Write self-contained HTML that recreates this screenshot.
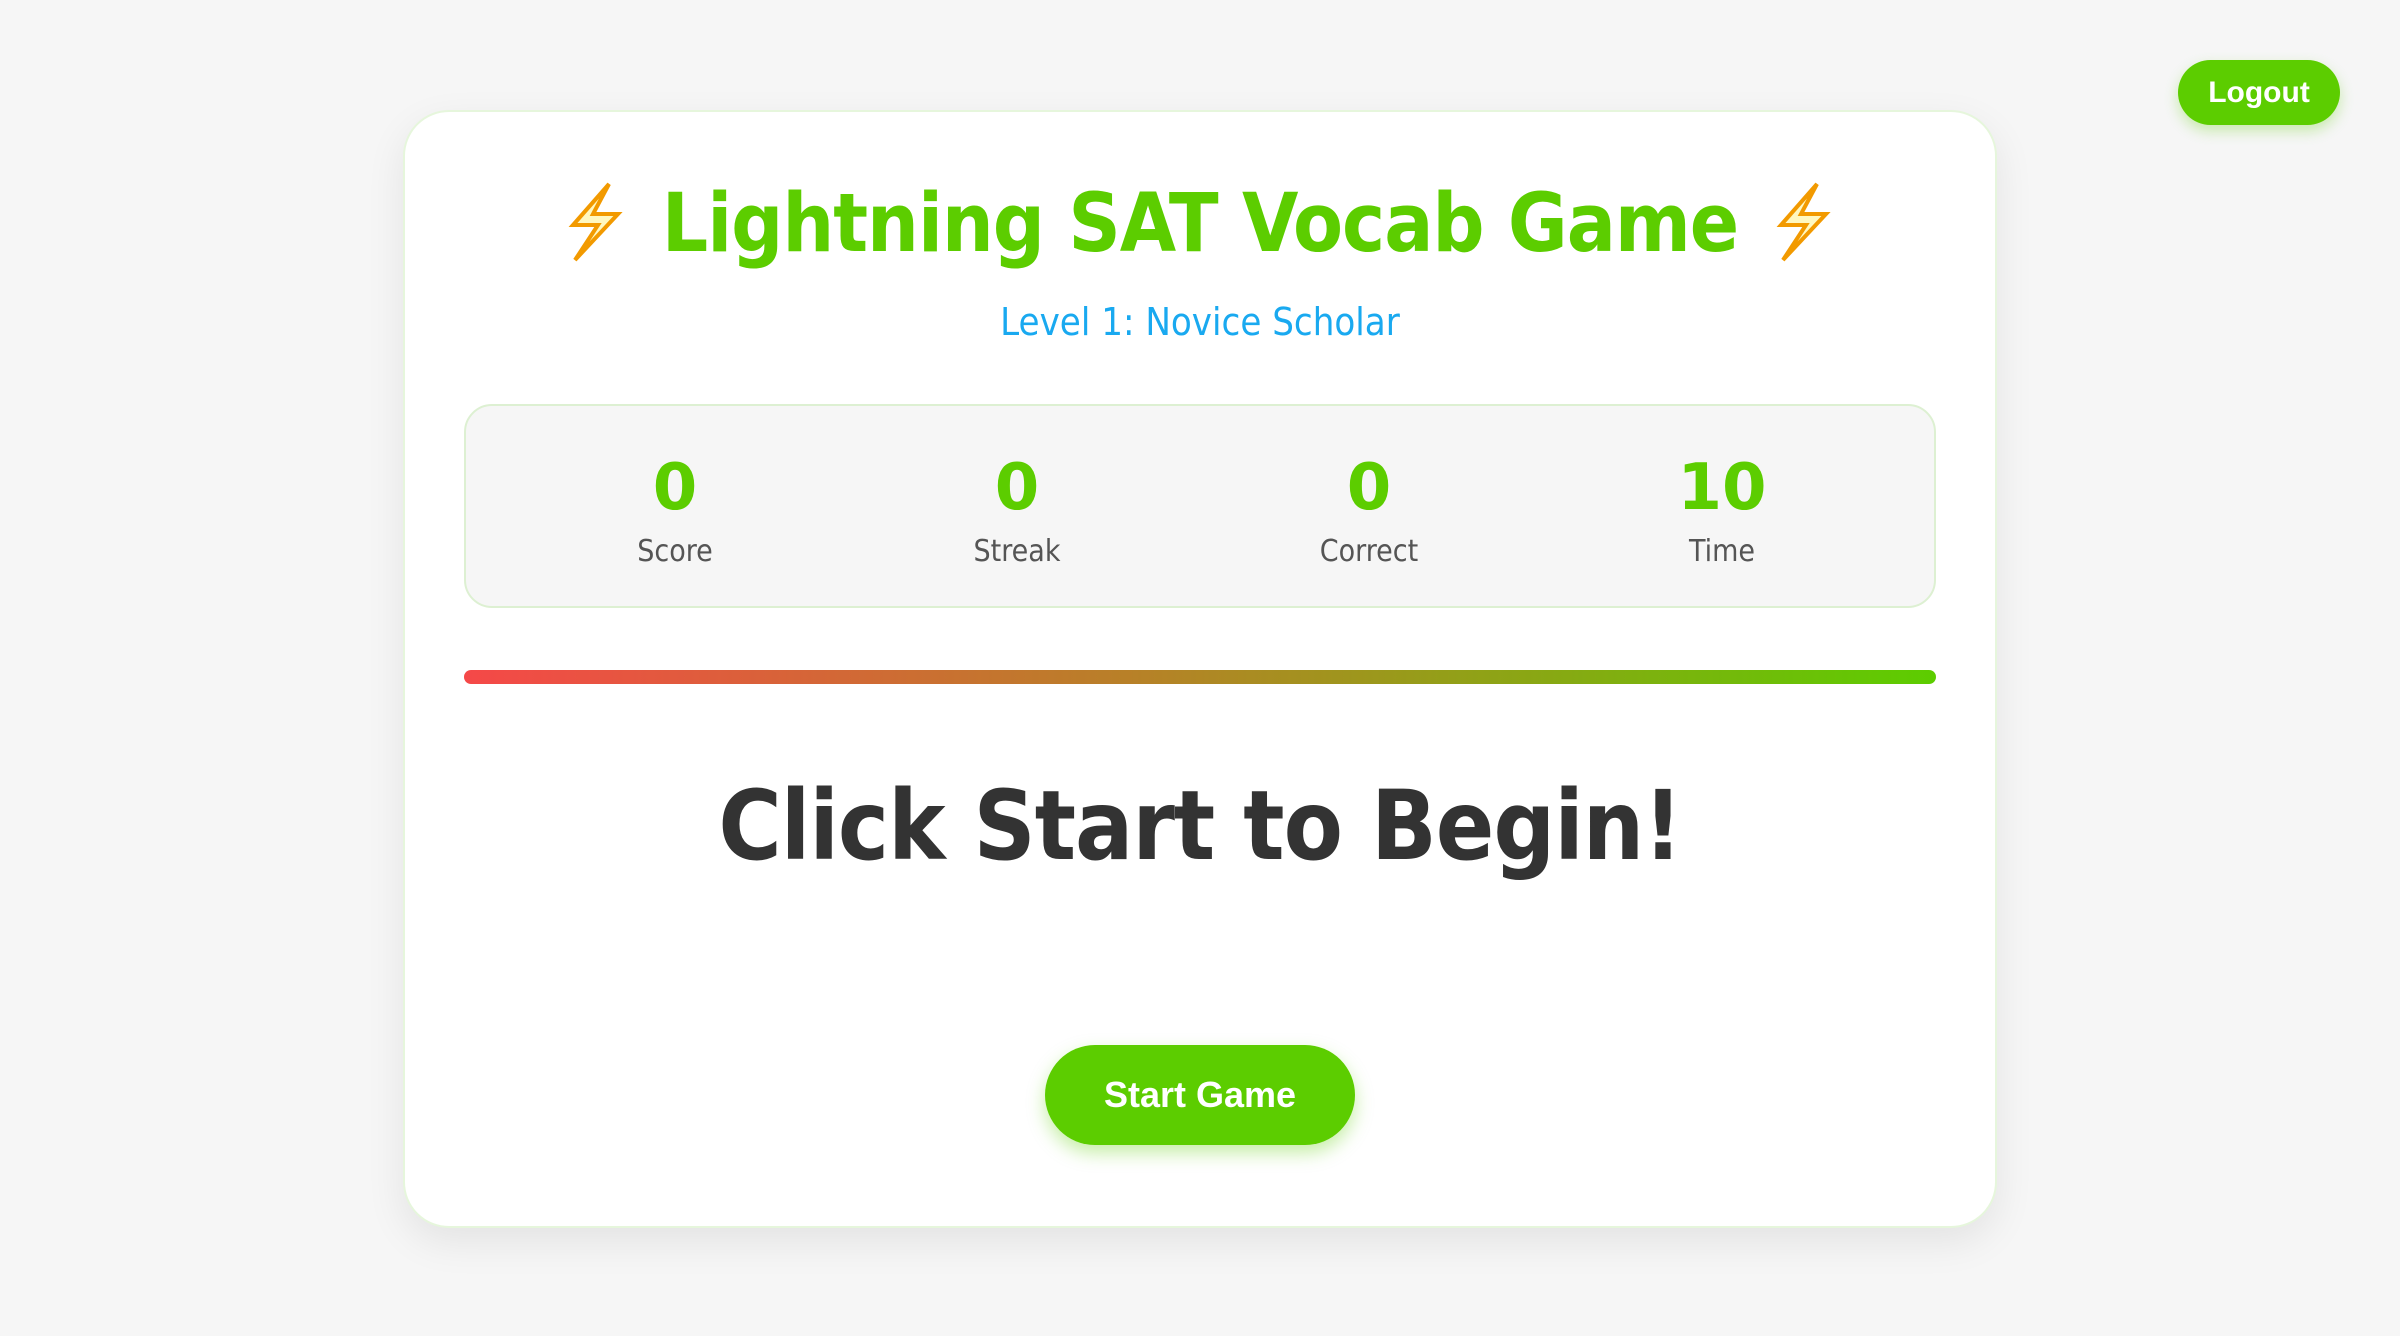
<!DOCTYPE html>
<html><head><meta charset="utf-8"><style>
body{margin:0;width:2400px;height:1336px;background:#f6f6f6;font-family:"DejaVu Sans","Liberation Sans",sans-serif;position:relative;overflow:hidden}
.logout{position:absolute;left:2178px;top:60px;width:162px;height:65px;border-radius:33px;background:#5ccd00;color:#fff;font:bold 30px "Liberation Sans",sans-serif;display:flex;align-items:center;justify-content:center;box-shadow:0 6px 14px rgba(92,205,0,.3)}
.card{position:absolute;left:403px;top:110px;width:1590px;height:1114px;background:#fff;border:2px solid #e6f6dc;border-radius:46px;box-shadow:0 14px 40px rgba(0,0,0,.08)}
.title{position:absolute;left:0;right:0;top:177px;text-align:center;color:#5ccd00;font:bold 81px "DejaVu Sans Condensed","DejaVu Sans",sans-serif;letter-spacing:-1px;white-space:nowrap}
.sub{position:absolute;left:0;right:0;top:300px;text-align:center;color:#19a9f0;font:38px "DejaVu Sans Condensed","DejaVu Sans",sans-serif}
.stats{position:absolute;left:464px;top:404px;width:1468px;height:200px;border:2px solid #ddf0d2;border-radius:28px;background:#f6f6f6}
.st{position:absolute;top:0;width:300px;margin-left:-150px;text-align:center}
.st b{display:block;margin-top:42px;color:#5ccd00;font:bold 64px "DejaVu Sans",sans-serif;line-height:80px}
.st span{display:block;color:#555;font:30px "DejaVu Sans Condensed","DejaVu Sans",sans-serif;margin-top:6px}
.bar{position:absolute;left:464px;top:670px;width:1472px;height:14px;border-radius:7px;background:linear-gradient(90deg,#f54848,#b88028 45%,#5ccd00)}
.big{position:absolute;left:0;right:0;top:770px;text-align:center;color:#333;font:bold 96px "DejaVu Sans Condensed","DejaVu Sans",sans-serif;letter-spacing:-1px}
.start{position:absolute;left:1045px;top:1045px;width:310px;height:100px;border-radius:50px;background:#5ccd00;color:#fff;font:bold 36px "Liberation Sans",sans-serif;display:flex;align-items:center;justify-content:center;box-shadow:0 8px 18px rgba(92,205,0,.35)}
svg{position:absolute}
</style></head><body>
<div class="logout">Logout</div>
<div class="card"></div>
<svg style="left:0;top:0" width="2400" height="1336">
<g fill="#fff8c0" stroke="#f29a00" stroke-width="4" stroke-linejoin="miter">
<polygon points="609,184 573,225 598,225 575,260 618,214 593,214"/>
<polygon points="1817,184 1781,225 1806,225 1783,260 1826,214 1801,214"/>
</g></svg>
<div class="title">Lightning SAT Vocab Game</div>
<div class="sub">Level 1: Novice Scholar</div>
<div class="stats">
<div class="st" style="left:209px"><b>0</b><span>Score</span></div>
<div class="st" style="left:551px"><b>0</b><span>Streak</span></div>
<div class="st" style="left:903px"><b>0</b><span>Correct</span></div>
<div class="st" style="left:1256px"><b>10</b><span>Time</span></div>
</div>
<div class="bar"></div>
<div class="big">Click Start to Begin!</div>
<div class="start">Start Game</div>
</body></html>
